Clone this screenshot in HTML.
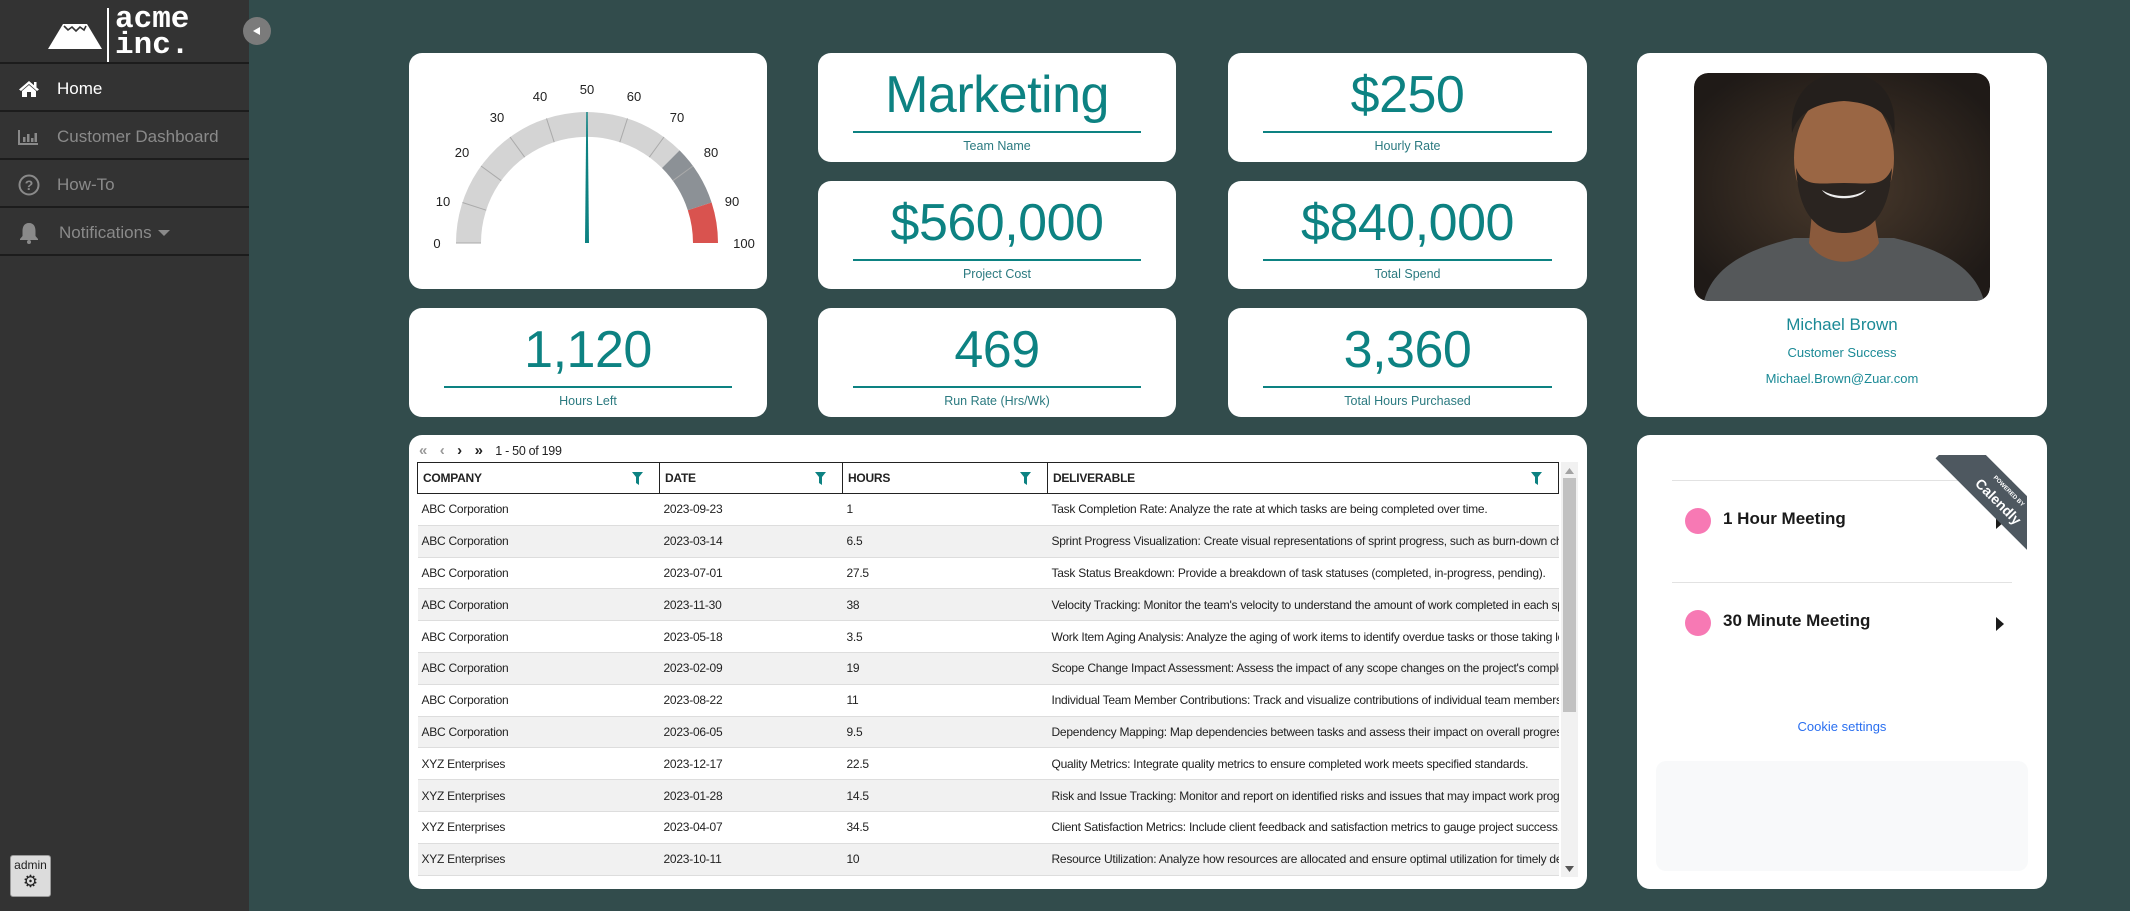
<!DOCTYPE html>
<html><head><meta charset="utf-8"><style>
*{box-sizing:border-box;margin:0;padding:0}
body{width:2130px;height:911px;overflow:hidden;background:#324c4c;font-family:"Liberation Sans",sans-serif;position:relative}
.side{position:absolute;left:0;top:0;width:249px;height:911px;background:#333}
.nav{position:absolute;left:0;width:249px;height:48px;border-top:2px solid #1c1c1c;color:#8a8a8a;font-size:17px;display:flex;align-items:center;padding-top:3px}
.nav .ic{width:57px;display:flex;justify-content:center}
.card{position:absolute;background:#fff;border-radius:13px}
.stat .num{position:absolute;left:0;right:0;top:15px;text-align:center;color:#0d8282;font-size:52px;line-height:54px;letter-spacing:-0.5px}
.stat .ln{position:absolute;left:35px;right:35px;top:78px;height:2px;background:#0d8282}
.stat .lb{position:absolute;left:0;right:0;top:86px;text-align:center;color:#2b7a80;font-size:12.5px}
table{border-collapse:collapse;font-family:"Liberation Sans Narrow","Liberation Sans",sans-serif;font-size:12px;letter-spacing:-0.25px;color:#222;table-layout:fixed}
td{height:31.8px;padding-left:4px;white-space:nowrap;overflow:hidden;border-bottom:1px solid #ddd}
tr.g td{background:#f1f1f1}
th{height:31px;border:1px solid #222;text-align:left;padding-left:5px;font-size:12px;font-weight:bold;position:relative}
th svg{position:absolute;right:16px;top:9px}
</style></head><body>
<div class="side">
 <svg style="position:absolute;left:48px;top:20px" width="54" height="30" viewBox="0 0 54 30"><path d="M0 29 L15 4 L39 4 L54 29 Z" fill="#fff"/><path d="M16 6 L20 10 L24 7 L28 11 L32 7 L36 10 L38 6" stroke="#333" stroke-width="1.6" fill="none"/></svg>
 <div style="position:absolute;left:107px;top:8px;width:2px;height:55px;background:#fff"></div>
 <div style="position:absolute;left:115px;top:7px;color:#fff;font-family:'Liberation Mono',monospace;font-weight:bold;font-size:31px;line-height:26px">acme<br>inc.</div>
 <div class="nav" style="top:62px;color:#fff"><div class="ic"><svg width="22" height="18" viewBox="0 0 22 18"><path d="M11 1 L1 9.5 L3 11 L11 4 L19 11 L21 9.5 Z M4 11 L11 5 L18 11 L18 17 L13 17 L13 12 L9 12 L9 17 L4 17 Z" fill="#fff"/><rect x="16" y="2" width="2.5" height="5" fill="#fff"/></svg></div>Home</div>
 <div class="nav" style="top:110px"><div class="ic"><svg width="21" height="16" viewBox="0 0 21 16"><path d="M1 1 V15 H20" stroke="#8a8a8a" stroke-width="2" fill="none"/><rect x="5" y="8" width="2.5" height="5" fill="#8a8a8a"/><rect x="9" y="5" width="2.5" height="8" fill="#8a8a8a"/><rect x="13" y="9" width="2.5" height="4" fill="#8a8a8a"/><rect x="16.5" y="4" width="2.5" height="9" fill="#8a8a8a"/></svg></div>Customer Dashboard</div>
 <div class="nav" style="top:158px"><div class="ic"><svg width="22" height="22" viewBox="0 0 22 22"><circle cx="11" cy="11" r="9.5" stroke="#8a8a8a" stroke-width="2" fill="none"/><text x="11" y="16" text-anchor="middle" font-size="14" font-weight="bold" fill="#8a8a8a" font-family="Liberation Sans">?</text></svg></div>How-To</div>
 <div class="nav" style="top:206px"><div class="ic"><svg width="20" height="22" viewBox="0 0 20 22"><path d="M10 1 C5 1 3.5 5 3.5 9 V14 L1 17 V18 H19 V17 L16.5 14 V9 C16.5 5 15 1 10 1 Z" fill="#8a8a8a"/><circle cx="10" cy="20" r="2" fill="#8a8a8a"/></svg></div><span style="margin-left:2px">Notifications</span><svg style="margin-left:6px" width="12" height="8"><path d="M0 1 H12 L6 7 Z" fill="#8a8a8a"/></svg></div>
 <div style="position:absolute;left:0;top:254px;width:249px;height:2px;background:#1c1c1c"></div>
 <div style="position:absolute;left:10px;top:855px;width:41px;height:42px;background:#dcdcdc;border:1px solid #999;border-radius:3px;text-align:center;font-size:12px;color:#222;line-height:14px;padding-top:2px">admin<br><span style="font-size:17px;line-height:20px">⚙</span></div>
</div>
<div style="position:absolute;left:243px;top:17px;width:28px;height:28px;border-radius:50%;background:#7b7b7b"><svg style="position:absolute;left:9px;top:9px" width="9" height="10"><path d="M8 1 L1 5 L8 9 Z" fill="#fff"/></svg></div>

<!-- gauge -->
<div class="card" style="left:409px;top:53px;width:358px;height:236px">
<svg width="358" height="236" viewBox="409 53 358 236" style="position:absolute;left:0;top:0">
 <path d="M456 243 A131 131 0 0 1 679.6 150.4 L662 168 A106 106 0 0 0 481 243 Z" fill="#d4d4d4"/>
 <path d="M679.6 150.4 A131 131 0 0 1 711.6 202.5 L687.8 210.2 A106 106 0 0 0 662 168 Z" fill="#8c9196"/>
 <path d="M711.6 202.5 A131 131 0 0 1 718 243 L693 243 A106 106 0 0 0 687.8 210.2 Z" fill="#d9534f"/>
 <g stroke="#aaa" stroke-width="1">
  <line x1="462.4" y1="202.5" x2="486.2" y2="210.2"/><line x1="481" y1="166" x2="501.2" y2="180.7"/><line x1="510" y1="137" x2="524.7" y2="157.2"/><line x1="546.5" y1="118.4" x2="554.2" y2="142.2"/><line x1="627.5" y1="118.4" x2="619.8" y2="142.2"/><line x1="664" y1="137" x2="649.3" y2="157.2"/><line x1="693" y1="166" x2="672.8" y2="180.7"/><line x1="456" y1="243" x2="481" y2="243"/>
 </g>
 <path d="M585 243 L586.3 112 L587.7 112 L589 243 Z" fill="#0d8282"/>
 <g font-size="13" fill="#222" font-family="Liberation Sans" text-anchor="middle">
  <text x="437" y="248">0</text><text x="443" y="206">10</text><text x="462" y="157">20</text><text x="497" y="122">30</text><text x="540" y="101">40</text><text x="587" y="94">50</text><text x="634" y="101">60</text><text x="677" y="122">70</text><text x="711" y="157">80</text><text x="732" y="206">90</text><text x="744" y="248">100</text>
 </g>
</svg></div>

<div class="card stat" style="left:818px;top:53px;width:358px;height:109px"><div class="num">Marketing</div><div class="ln"></div><div class="lb">Team Name</div></div>
<div class="card stat" style="left:1228px;top:53px;width:359px;height:109px"><div class="num">$250</div><div class="ln"></div><div class="lb">Hourly Rate</div></div>
<div class="card stat" style="left:818px;top:181px;width:358px;height:108px"><div class="num">$560,000</div><div class="ln"></div><div class="lb">Project Cost</div></div>
<div class="card stat" style="left:1228px;top:181px;width:359px;height:108px"><div class="num">$840,000</div><div class="ln"></div><div class="lb">Total Spend</div></div>
<div class="card stat" style="left:409px;top:308px;width:358px;height:109px"><div class="num">1,120</div><div class="ln"></div><div class="lb">Hours Left</div></div>
<div class="card stat" style="left:818px;top:308px;width:358px;height:109px"><div class="num">469</div><div class="ln"></div><div class="lb">Run Rate (Hrs/Wk)</div></div>
<div class="card stat" style="left:1228px;top:308px;width:359px;height:109px"><div class="num">3,360</div><div class="ln"></div><div class="lb">Total Hours Purchased</div></div>

<!-- profile -->
<div class="card" style="left:1637px;top:53px;width:410px;height:364px">
 <svg style="position:absolute;left:57px;top:20px;border-radius:14px" width="296" height="228" viewBox="0 0 296 228">
  <defs><radialGradient id="bg" cx="0.5" cy="0.5" r="0.6"><stop offset="0" stop-color="#4a3a2c"/><stop offset="1" stop-color="#1f1a17"/></radialGradient><clipPath id="c"><rect width="296" height="228" rx="14"/></clipPath></defs>
  <g clip-path="url(#c)">
  <rect width="296" height="228" fill="url(#bg)"/>
  <path d="M10 228 C20 190 60 175 100 165 L200 165 C240 175 280 190 290 228 Z" fill="#55585a"/>
  <path d="M118 140 L115 170 C130 195 170 195 185 170 L180 140 Z" fill="#8a5a3c"/>
  <ellipse cx="150" cy="85" rx="50" ry="68" fill="#9a6644"/>
  <path d="M102 95 C105 150 130 160 150 160 C170 160 195 150 198 95 C190 115 175 110 150 110 C125 110 110 115 102 95 Z" fill="#2a2420"/>
  <path d="M128 117 C140 125 160 125 172 117 C165 128 135 128 128 117 Z" fill="#eee"/>
  <path d="M98 60 C95 20 120 0 150 0 C182 0 205 20 200 62 C195 40 180 30 150 28 C120 30 104 40 98 60 Z" fill="#241f1c"/>
  </g>
 </svg>
 <div style="position:absolute;left:0;right:0;top:262px;text-align:center;color:#1b8a96;font-size:17px">Michael Brown</div>
 <div style="position:absolute;left:0;right:0;top:292px;text-align:center;color:#1b8a96;font-size:13px">Customer Success</div>
 <div style="position:absolute;left:0;right:0;top:318px;text-align:center;color:#1b8a96;font-size:13px">Michael.Brown@Zuar.com</div>
</div>

<!-- table -->
<div class="card" style="left:409px;top:435px;width:1178px;height:454px;overflow:hidden">
 <div style="position:absolute;left:10px;top:7px;font-family:'Liberation Sans',sans-serif;font-size:12.5px;color:#222;white-space:nowrap;letter-spacing:-0.3px"><span style="color:#999;font-weight:bold;font-size:15px">«</span>&nbsp;&nbsp;&nbsp;&nbsp;<span style="color:#999;font-weight:bold;font-size:15px">‹</span>&nbsp;&nbsp;&nbsp;&nbsp;<b style="font-size:15px">›</b>&nbsp;&nbsp;&nbsp;&nbsp;<b style="font-size:15px">»</b>&nbsp;&nbsp;&nbsp;&nbsp;1 - 50 of 199</div>
 <table style="position:absolute;left:8px;top:27px;width:1141px">
  <colgroup><col style="width:242px"><col style="width:183px"><col style="width:205px"><col style="width:511px"></colgroup>
  <tr><th>COMPANY<svg width="11" height="13"><path d="M0 0 H11 L7 5 V13 L4 11 V5 Z" fill="#0d8282"/></svg></th><th>DATE<svg width="11" height="13"><path d="M0 0 H11 L7 5 V13 L4 11 V5 Z" fill="#0d8282"/></svg></th><th>HOURS<svg width="11" height="13"><path d="M0 0 H11 L7 5 V13 L4 11 V5 Z" fill="#0d8282"/></svg></th><th>DELIVERABLE<svg width="11" height="13"><path d="M0 0 H11 L7 5 V13 L4 11 V5 Z" fill="#0d8282"/></svg></th></tr>
  <tr><td>ABC Corporation</td><td>2023-09-23</td><td>1</td><td>Task Completion Rate: Analyze the rate at which tasks are being completed over time.</td></tr>
  <tr class="g"><td>ABC Corporation</td><td>2023-03-14</td><td>6.5</td><td>Sprint Progress Visualization: Create visual representations of sprint progress, such as burn-down charts.</td></tr>
  <tr><td>ABC Corporation</td><td>2023-07-01</td><td>27.5</td><td>Task Status Breakdown: Provide a breakdown of task statuses (completed, in-progress, pending).</td></tr>
  <tr class="g"><td>ABC Corporation</td><td>2023-11-30</td><td>38</td><td>Velocity Tracking: Monitor the team's velocity to understand the amount of work completed in each sprint.</td></tr>
  <tr><td>ABC Corporation</td><td>2023-05-18</td><td>3.5</td><td>Work Item Aging Analysis: Analyze the aging of work items to identify overdue tasks or those taking longer.</td></tr>
  <tr class="g"><td>ABC Corporation</td><td>2023-02-09</td><td>19</td><td>Scope Change Impact Assessment: Assess the impact of any scope changes on the project's completion.</td></tr>
  <tr><td>ABC Corporation</td><td>2023-08-22</td><td>11</td><td>Individual Team Member Contributions: Track and visualize contributions of individual team members.</td></tr>
  <tr class="g"><td>ABC Corporation</td><td>2023-06-05</td><td>9.5</td><td>Dependency Mapping: Map dependencies between tasks and assess their impact on overall progress.</td></tr>
  <tr><td>XYZ Enterprises</td><td>2023-12-17</td><td>22.5</td><td>Quality Metrics: Integrate quality metrics to ensure completed work meets specified standards.</td></tr>
  <tr class="g"><td>XYZ Enterprises</td><td>2023-01-28</td><td>14.5</td><td>Risk and Issue Tracking: Monitor and report on identified risks and issues that may impact work progress.</td></tr>
  <tr><td>XYZ Enterprises</td><td>2023-04-07</td><td>34.5</td><td>Client Satisfaction Metrics: Include client feedback and satisfaction metrics to gauge project success.</td></tr>
  <tr class="g"><td>XYZ Enterprises</td><td>2023-10-11</td><td>10</td><td>Resource Utilization: Analyze how resources are allocated and ensure optimal utilization for timely delivery.</td></tr>
 </table>
 <div style="position:absolute;left:1152px;top:27px;width:17px;height:415px;background:#f1f1f1">
  <svg style="position:absolute;left:4px;top:6px" width="9" height="6"><path d="M0 6 L4.5 0 L9 6 Z" fill="#a3a3a3"/></svg>
  <div style="position:absolute;left:2px;top:16px;width:13px;height:234px;background:#c1c1c1"></div>
  <svg style="position:absolute;left:4px;top:404px" width="9" height="6"><path d="M0 0 L4.5 6 L9 0 Z" fill="#555"/></svg>
 </div>
</div>

<!-- calendly -->
<div class="card" style="left:1637px;top:435px;width:410px;height:454px;overflow:hidden">
 <div style="position:absolute;left:35px;top:45px;width:340px;height:1px;background:#e2e2e2"></div>
 <div style="position:absolute;left:35px;top:147px;width:340px;height:1px;background:#e2e2e2"></div>
 <div style="position:absolute;left:48px;top:73px;width:26px;height:26px;border-radius:50%;background:#f779b4"></div>
 <div style="position:absolute;left:86px;top:74px;font-size:17px;font-weight:bold;color:#1a1a1a">1 Hour Meeting</div>
 <div style="position:absolute;left:48px;top:175px;width:26px;height:26px;border-radius:50%;background:#f779b4"></div>
 <div style="position:absolute;left:86px;top:176px;font-size:17px;font-weight:bold;color:#1a1a1a">30 Minute Meeting</div>
 <svg style="position:absolute;left:359px;top:80px" width="9" height="14"><path d="M0 0 L8 7 L0 14 Z" fill="#1a1a1a"/></svg>
 <svg style="position:absolute;left:359px;top:182px" width="9" height="14"><path d="M0 0 L8 7 L0 14 Z" fill="#1a1a1a"/></svg>
 <div style="position:absolute;left:280px;top:20px;width:110px;height:110px;overflow:hidden">
  <div style="position:absolute;left:10px;top:24px;width:150px;height:38px;background:#4e5860;transform:rotate(45deg);color:#fff;text-align:center;line-height:11px;padding-top:5px">
   <div style="font-size:6px;font-weight:bold">POWERED BY</div><div style="font-size:14px;font-weight:bold;line-height:16px">Calendly</div>
  </div>
 </div>
 <div style="position:absolute;left:0;right:0;top:284px;text-align:center;color:#2a6ff0;font-size:13px">Cookie settings</div>
 <div style="position:absolute;left:19px;top:326px;width:372px;height:110px;background:#f8f9fa;border-radius:10px"></div>
</div>
</body></html>
